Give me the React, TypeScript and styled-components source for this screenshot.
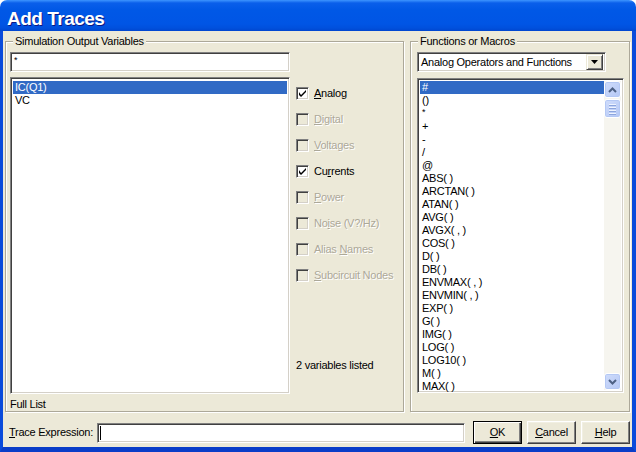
import React from "react";
import styled, { createGlobalStyle, css } from "styled-components";

const GlobalStyle = createGlobalStyle`
  html, body {
    margin: 0;
    padding: 0;
    background: #ffffff;
  }
  body {
    font-family: "Liberation Sans", Arial, sans-serif;
    font-size: 11px;
    letter-spacing: -0.25px;
    color: #000;
  }
`;

const sunken = css`
  box-sizing: border-box;
  background: #ffffff;
  border: 1px solid;
  border-color: #808080 #ffffff #ffffff #808080;
  box-shadow: inset 1px 1px 0 #404040, inset -1px -1px 0 #d4d0c8;
`;

const Window = styled.div`
  width: 636px;
  height: 452px;
  display: flex;
  flex-direction: column;
  overflow: hidden;
`;

const TitleBar = styled.div`
  height: 31px;
  flex: none;
  box-sizing: border-box;
  padding: 9px 0 0 7px;
  border-radius: 7px 7px 0 0;
  background: linear-gradient(
    #3d95ff 0,
    #0a5fea 3px,
    #0058e6 10px,
    #0055e5 24px,
    #0050dd 28px,
    #0046cf 31px
  );
  color: #ffffff;
  font: bold 19px/19px "Liberation Sans", Arial, sans-serif;
  letter-spacing: -0.5px;
  text-shadow: 1px 1px 0 #0a1883;
`;

const Frame = styled.div`
  flex: 1;
  display: flex;
  flex-direction: column;
  background: #ece9d8;
  border: solid #0a4bdb;
  border-width: 0 4px 5px 3px;
  border-bottom-color: #0a3dc8;
  padding: 10px 1px 0 2px;
`;

const GroupsRow = styled.div`
  display: flex;
  gap: 6px;
  height: 372px;
`;

const Group = styled.div<{ $w: number }>`
  position: relative;
  box-sizing: border-box;
  width: ${(p) => p.$w - 1}px;
  height: 371px;
  border: 1px solid #aca899;
  box-shadow: inset 1px 1px 0 #ffffff, 1px 1px 0 #ffffff;
  display: flex;
  flex-direction: column;
`;

const Legend = styled.span`
  position: absolute;
  top: -7px;
  left: 7px;
  padding: 0 2px;
  line-height: 13px;
  background: #ece9d8;
`;

const LeftBody = styled.div`
  flex: 1;
  display: grid;
  grid-template-columns: 280px 1fr;
  grid-template-rows: 20px 322px auto;
  column-gap: 6px;
  padding: 10px 4px 0 4px;
`;

const TextBox = styled.div<{ $w?: number }>`
  ${sunken};
  height: 20px;
  width: ${(p) => (p.$w ? `${p.$w}px` : "auto")};
  display: flex;
  align-items: center;
  padding-left: 3px;
  line-height: 13px;
`;

const FilterBox = styled(TextBox)`
  grid-row: 1;
  grid-column: 1;
`;

const ListBox = styled.div<{ $h: number; $mt: number }>`
  ${sunken};
  height: ${(p) => p.$h}px;
  margin-top: ${(p) => p.$mt}px;
  padding: 2px;
  display: flex;
  overflow: hidden;
`;

const VariableList = styled(ListBox)`
  grid-row: 2;
  grid-column: 1;
`;

const Items = styled.div<{ $pt?: number }>`
  flex: 1;
  padding-top: ${(p) => p.$pt ?? 0}px;
`;

const Item = styled.div<{ $selected?: boolean }>`
  height: 13px;
  line-height: 13px;
  padding-left: 2px;
  white-space: nowrap;
  background: ${(p) => (p.$selected ? "#316ac5" : "transparent")};
  color: ${(p) => (p.$selected ? "#ffffff" : "#000000")};
`;

const Options = styled.div`
  grid-row: 2;
  grid-column: 2;
  display: flex;
  flex-direction: column;
  gap: 13px;
  padding-top: 15px;
`;

const CheckRow = styled.div<{ $disabled?: boolean }>`
  display: flex;
  align-items: center;
  gap: 5px;
  height: 13px;
  line-height: 13px;
  color: ${(p) => (p.$disabled ? "#aca899" : "#000")};
  text-shadow: ${(p) => (p.$disabled ? "1px 1px 0 #ffffff" : "none")};
`;

const CheckBox = styled.span<{ $disabled?: boolean }>`
  box-sizing: border-box;
  width: 13px;
  height: 13px;
  flex: none;
  border: 1px solid;
  border-color: #808080 #ffffff #ffffff #808080;
  box-shadow: inset 1px 1px 0 #404040, inset -1px -1px 0 #d4d0c8;
  background: ${(p) => (p.$disabled ? "#ece9d8" : "#ffffff")};
  display: flex;
  align-items: center;
  justify-content: center;
`;

const Status = styled.div`
  margin-top: auto;
  margin-bottom: 22px;
  line-height: 13px;
`;

const Caption = styled.div`
  grid-row: 3;
  grid-column: 1 / span 2;
  margin-top: 4px;
  line-height: 13px;
`;

const RightBody = styled.div`
  flex: 1;
  display: flex;
  flex-direction: column;
  padding: 10px 5px 0 6px;
`;

const Combo = styled.div`
  ${sunken};
  width: 189px;
  height: 20px;
  display: flex;
  align-items: center;
  padding: 2px 2px 2px 3px;
`;

const ComboText = styled.span`
  flex: 1;
  line-height: 13px;
`;

const ComboButton = styled.span`
  box-sizing: border-box;
  width: 17px;
  height: 16px;
  background: #ece9d8;
  border: 1px solid;
  border-color: #ece9d8 #404040 #404040 #ece9d8;
  box-shadow: inset 1px 1px 0 #ffffff, inset -1px -1px 0 #808080;
  display: flex;
  align-items: center;
  justify-content: center;
`;

const ScrollBar = styled.div`
  width: 17px;
  flex: none;
  display: flex;
  flex-direction: column;
  background: #f6f5ef;
`;

const ScrollButton = styled.div`
  box-sizing: border-box;
  height: 17px;
  border: 1px solid #ffffff;
  border-radius: 3px;
  background: linear-gradient(135deg, #cfdcfb, #b5c8f5);
  box-shadow: inset 0 0 0 1px #b4c8f4;
  display: flex;
  align-items: center;
  justify-content: center;
`;

const Thumb = styled(ScrollButton)`
  height: 19px;
  margin-top: 1px;
  flex-direction: column;
  gap: 2px;
`;

const Grip = styled.span`
  width: 7px;
  height: 1px;
  background: #eef3fe;
  box-shadow: 0 1px 0 #8ca5dd;
`;

const Spacer = styled.div`
  flex: 1;
`;

const BottomRow = styled.div`
  display: flex;
  align-items: center;
  height: 23px;
  margin-top: 8px;
  padding-left: 4px;
`;

const Label = styled.span`
  width: 88px;
  line-height: 13px;
  white-space: nowrap;
`;

const Caret = styled.span`
  width: 1px;
  height: 14px;
  margin-left: -1px;
  background: #000;
`;

const Button = styled.div<{ $default?: boolean }>`
  box-sizing: border-box;
  width: 49px;
  height: 23px;
  margin-left: ${(p) => (p.$default ? 8 : 5)}px;
  background: #ece9d8;
  border: 1px solid;
  border-color: ${(p) =>
    p.$default ? "#000000" : "#ffffff #404040 #404040 #ffffff"};
  box-shadow: ${(p) =>
    p.$default
      ? "inset 1px 1px 0 #ffffff, inset -1px -1px 0 #404040, inset -2px -2px 0 #808080"
      : "inset -1px -1px 0 #808080, inset 1px 1px 0 #f1efe2"};
  display: flex;
  align-items: center;
  justify-content: center;
  line-height: 13px;
`;

const Ast = styled.span`
  position: relative;
  top: -2px;
  font-size: 9px;
`;

const Check = () => (
  <svg width="7" height="7" viewBox="0 0 7 7">
    <path d="M0 2 L0 5 L2 7 L7 2 L7 0 L2 5 Z" fill="#000" />
  </svg>
);

const options = [
  { pre: "", key: "A", rest: "nalog", checked: true },
  { pre: "", key: "D", rest: "igital", disabled: true },
  { pre: "", key: "V", rest: "oltages", disabled: true },
  { pre: "Cu", key: "r", rest: "rents", checked: true },
  { pre: "", key: "P", rest: "ower", disabled: true },
  { pre: "No", key: "i", rest: "se (V?/Hz)", disabled: true },
  { pre: "Alias ", key: "N", rest: "ames", disabled: true },
  { pre: "", key: "S", rest: "ubcircuit Nodes", disabled: true },
];

const functions = [
  "#", "()", "*", "+", "-", "/", "@", "ABS( )", "ARCTAN( )", "ATAN( )",
  "AVG( )", "AVGX( , )", "COS( )", "D( )", "DB( )", "ENVMAX( , )",
  "ENVMIN( , )", "EXP( )", "G( )", "IMG( )", "LOG( )", "LOG10( )", "M( )",
  "MAX( )",
];

export default function App() {
  return (
    <Window>
      <GlobalStyle />
      <TitleBar>Add Traces</TitleBar>
      <Frame>
        <GroupsRow>
          <Group $w={400}>
            <Legend>Simulation Output Variables</Legend>
            <LeftBody>
              <FilterBox>
                <Ast>*</Ast>
              </FilterBox>
              <VariableList $h={317} $mt={5}>
                <Items $pt={1}>
                  <Item $selected>IC(Q1)</Item>
                  <Item>VC</Item>
                </Items>
              </VariableList>
              <Options>
                {options.map((o, i) => (
                  <CheckRow key={i} $disabled={o.disabled}>
                    <CheckBox $disabled={o.disabled}>
                      {o.checked && <Check />}
                    </CheckBox>
                    <span>
                      {o.pre}
                      <u>{o.key}</u>
                      {o.rest}
                    </span>
                  </CheckRow>
                ))}
                <Status>2 variables listed</Status>
              </Options>
              <Caption>Full List</Caption>
            </LeftBody>
          </Group>
          <Group $w={221}>
            <Legend>Functions or Macros</Legend>
            <RightBody>
              <Combo>
                <ComboText>Analog Operators and Functions</ComboText>
                <ComboButton>
                  <svg width="7" height="4" viewBox="0 0 7 4">
                    <path d="M0 0 H7 L3.5 4 Z" fill="#000" />
                  </svg>
                </ComboButton>
              </Combo>
              <ListBox $h={315} $mt={6}>
                <Items>
                  {functions.map((f, i) => (
                    <Item key={f} $selected={i === 0}>
                      {f === "*" ? <Ast>*</Ast> : f}
                    </Item>
                  ))}
                </Items>
                <ScrollBar>
                  <ScrollButton>
                    <svg width="9" height="6" viewBox="0 0 9 6">
                      <path d="M1 5 L4.5 1.5 L8 5" stroke="#4d6185" strokeWidth="2" fill="none" />
                    </svg>
                  </ScrollButton>
                  <Thumb>
                    <Grip />
                    <Grip />
                    <Grip />
                    <Grip />
                  </Thumb>
                  <Spacer />
                  <ScrollButton>
                    <svg width="9" height="6" viewBox="0 0 9 6">
                      <path d="M1 1 L4.5 4.5 L8 1" stroke="#4d6185" strokeWidth="2" fill="none" />
                    </svg>
                  </ScrollButton>
                </ScrollBar>
              </ListBox>
            </RightBody>
          </Group>
        </GroupsRow>
        <BottomRow>
          <Label>
            <u>T</u>race Expression:
          </Label>
          <TextBox $w={368}>
            <Caret />
          </TextBox>
          <Button $default>
            <span>
              <u>O</u>K
            </span>
          </Button>
          <Button>
            <span>
              <u>C</u>ancel
            </span>
          </Button>
          <Button>
            <span>
              <u>H</u>elp
            </span>
          </Button>
        </BottomRow>
      </Frame>
    </Window>
  );
}
